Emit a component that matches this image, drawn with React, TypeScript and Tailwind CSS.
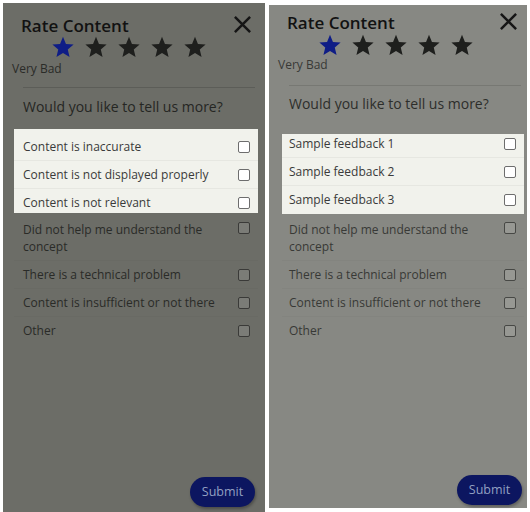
type Theme = {
  wrap: string;
  bg: string;
  dimText: string;
  dimBox: string;
  rowLine: string;
  btn: string;
  head: string;
  starsRow: string;
  label: string;
  divider: string;
  question: string;
  box: string;
  boxInner: string;
  rows: string;
  pad: string;
  wrapRow: string;
};

const STAR =
  "M12 1.8l2.95 7.1 7.65.6-5.83 5 1.8 7.5L12 18l-6.57 4 1.8-7.5-5.83-5 7.65-.6z";

function Star({ color }: { color: string }) {
  return (
    <svg viewBox="0 0 24 24" className="h-[24px] w-[24px]">
      <path d={STAR} fill={color} />
    </svg>
  );
}

function Check({ light, cls }: { light?: boolean; cls: string }) {
  return (
    <span
      className={`block h-[12px] w-[12px] flex-none rounded-[2px] border ${
        light ? "border-[#6d6d6d] bg-white" : cls
      }`}
    />
  );
}

function Panel({ theme, top }: { theme: Theme; top: string[] }) {
  const rest = [
    "There is a technical problem",
    "Content is insufficient or not there",
    "Other",
  ];
  return (
    <section className={`flex flex-col ${theme.wrap} ${theme.bg}`}>
      <header className={`flex items-start justify-between ${theme.head}`}>
        <h1 className="text-[17px] font-semibold leading-[22px] text-[#121212]">
          Rate Content
        </h1>
        <svg viewBox="0 0 20 20" className="h-[19px] w-[19px]">
          <path d="M2 2L18 18M18 2L2 18" stroke="#151515" strokeWidth="2.6" />
        </svg>
      </header>

      <div className={`flex gap-[9px] ${theme.starsRow}`}>
        <Star color="#0f1d86" />
        {[1, 2, 3, 4].map((i) => (
          <Star key={i} color="#1e1f1d" />
        ))}
      </div>
      <p className={`text-[12px] leading-[14px] ${theme.label}`}>Very Bad</p>

      <hr className={`border-0 border-t ${theme.divider}`} />
      <p className={`text-[14px] leading-[20px] ${theme.question}`}>
        Would you like to tell us more?
      </p>

      <div className={`overflow-hidden bg-[#f1f2ec] ${theme.box}`}>
        <div className={theme.boxInner}>
          {top.map((t, i) => (
            <div
              key={t}
              className={`flex h-[28px] items-center justify-between pr-[8px] text-[12px] text-[#3a3a3a] ${theme.pad} ${
                i < 2 ? "border-b border-[#e6e7e1]" : ""
              }`}
            >
              <span>{t}</span>
              <Check light cls="" />
            </div>
          ))}
        </div>
      </div>

      <div className={`text-[12px] ${theme.rows} ${theme.dimText}`}>
        <div
          className={`flex justify-between border-b pr-[8px] leading-[17px] ${theme.pad} ${theme.wrapRow} ${theme.rowLine}`}
        >
          <span className="w-[190px]">Did not help me understand the concept</span>
          <span className="mt-[1px]">
            <Check cls={theme.dimBox} />
          </span>
        </div>
        {rest.map((t, i) => (
          <div
            key={t}
            className={`flex h-[28px] items-center justify-between pr-[8px] ${theme.pad} ${
              i < 2 ? `border-b ${theme.rowLine}` : ""
            }`}
          >
            <span>{t}</span>
            <Check cls={theme.dimBox} />
          </div>
        ))}
      </div>

      <div className={`mt-auto flex justify-end ${theme.btn}`}>
        <button
          type="button"
          className="h-[30px] w-[65px] rounded-full bg-[#0c1660] text-[12.5px] text-[#93a0c2] shadow-[1px_2px_3px_rgba(0,0,0,0.3)]"
        >
          Submit
        </button>
      </div>
    </section>
  );
}

const left: Theme = {
  wrap: "ml-[3px] mt-[3px] h-[509px] w-[262px]",
  bg: "bg-[#6c6d67]",
  dimText: "text-[#2a2b28]",
  dimBox: "border-[#3a3a38] bg-[#7b7c77]",
  rowLine: "border-[#696a64]",
  btn: "pb-[5px] pr-[10px]",
  head: "pl-[18px] pr-[13px] pt-[12px]",
  starsRow: "mt-[-2px] pl-[48px]",
  label: "mt-[3px] pl-[9px] text-[#2a2b28]",
  divider: "ml-[20px] mr-[10px] mt-[11px] border-[#5c5d58]",
  question: "mt-[9px] pl-[20px] text-[#252623]",
  box: "ml-[11px] mr-[7px] mt-[12px] h-[84px]",
  boxInner: "mt-[4px]",
  rows: "ml-[11px] mr-[7px]",
  pad: "pl-[9px]",
  wrapRow: "pt-[8px] pb-[5px]",
};

const right: Theme = {
  wrap: "ml-[4px] mt-[5px] h-[503px] w-[258px]",
  bg: "bg-[#878883]",
  dimText: "text-[#383936]",
  dimBox: "border-[#474845] bg-[#979893]",
  rowLine: "border-[#83847f]",
  btn: "pb-[3px] pr-[5px]",
  head: "pl-[18px] pr-[9px] pt-[7px]",
  starsRow: "mt-[-1px] pl-[49px]",
  label: "mt-[1px] pl-[9px] text-[#383936]",
  divider: "ml-[20px] mr-[6px] mt-[13px] border-[#777873]",
  question: "mt-[8px] pl-[20px] text-[#2d2e2b]",
  box: "ml-[13px] mr-[3px] mt-[20px] h-[80px]",
  boxInner: "mt-[-4px]",
  rows: "ml-[13px] mr-[3px]",
  pad: "pl-[7px]",
  wrapRow: "pt-[7px] pb-[5px]",
};

export default function App() {
  return (
    <div className="flex h-[512px] w-[530px] bg-white font-['Open_Sans',sans-serif]">
      <Panel
        theme={left}
        top={[
          "Content is inaccurate",
          "Content is not displayed properly",
          "Content is not relevant",
        ]}
      />
      <Panel
        theme={right}
        top={["Sample feedback 1", "Sample feedback 2", "Sample feedback 3"]}
      />
    </div>
  );
}
